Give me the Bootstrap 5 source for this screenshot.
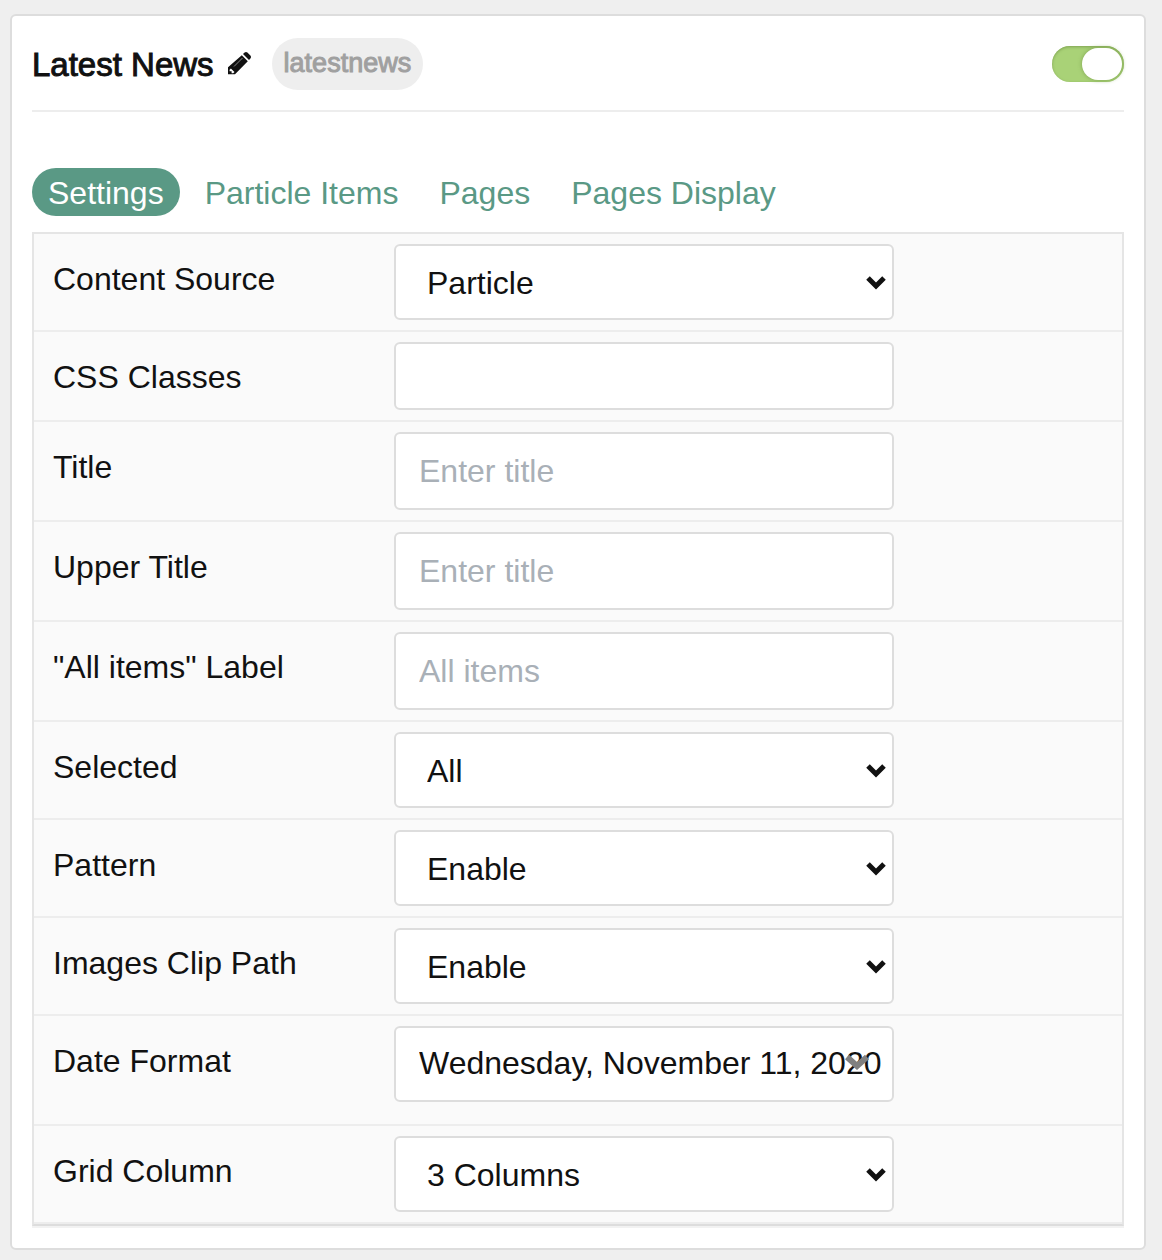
<!DOCTYPE html>
<html lang="en">
<head>
<meta charset="utf-8">
<meta name="viewport" content="width=device-width, initial-scale=1">
<title>Latest News</title>
<link href="https://cdn.jsdelivr.net/npm/bootstrap@5.3.0/dist/css/bootstrap.min.css" rel="stylesheet">
<style>
body{background:#efefef;color:#111;font-family:"Liberation Sans",Arial,sans-serif;font-size:32px;line-height:50px}
.page-wrap{padding:14px 16px 10px 10px}
.particle-card{border:2px solid #ddd;border-radius:6px;padding:22px 20px}
.particle-head{border-bottom:2px solid #ededed;padding-bottom:20px;margin-bottom:56px}
.particle-title{font-size:33px;line-height:50px;padding-top:2px;font-weight:400;-webkit-text-stroke:1px #111}
.edit-btn{color:#111;line-height:0;margin-left:13px}
.type-pill{background:#eee;color:#a0a0a0;font-size:27px;line-height:50px;height:52px;border-radius:26px;padding:0 12px;margin-left:21px;-webkit-text-stroke:1px #a0a0a0}
.toggle-switch.form-check-input{width:72px;height:36px;margin:0;border:0;border-radius:18px;background:#a9d277;box-shadow:inset 0 1px 3px #7fa352;appearance:none;position:relative}
.toggle-switch::after{content:"";position:absolute;top:2px;right:2px;width:40px;height:32px;border-radius:16px;background:#fff;box-shadow:0 0 4px #7fa352}
.tab-pills{gap:9px;margin-bottom:16px}
.tab-pills .nav-link{padding:0 16px;height:48px;line-height:50px;border-radius:24px;color:#5a9985}
.tab-pills .nav-link.active{background:#5a9985;color:#fff}
.settings-panel{background:#fafafa;border:2px solid #e5e5e5;border-bottom-color:#ddd;box-shadow:0 2px 0 #f2f2f2}
.setting-row{border-bottom:2px solid #ededed;padding:10px 20px 10px 19px}
.setting-row label{flex:0 0 341px;padding-top:10px}
.control-wrap{position:relative;flex:0 1 500px;min-width:0}
.setting-row.row-tall{padding-bottom:22px}
.control-wrap .form-control,.control-wrap .form-select{height:76px;border:2px solid #ddd;border-radius:6px;background-color:#fff;color:#111;font-size:32px;line-height:48px;padding:0 23px}
.control-wrap .form-control{height:78px}
.control-wrap .input-short{height:68px}
.control-wrap .form-control::placeholder{color:#a9b0b7}
.control-wrap .form-select{padding:2px 30px 0 31px;background-image:url("data:image/svg+xml,%3Csvg xmlns='http://www.w3.org/2000/svg' viewBox='0 0 20 14'%3E%3Cpath d='M2 2l8 8 8-8' fill='none' stroke='%23111' stroke-width='5'/%3E%3C/svg%3E");background-size:20px 14px;background-position:right 6px top 30px}
.control-wrap .date-select{padding:0 0 2px 23px;background-image:none}
.date-arrow{position:absolute;right:25px;top:28px;pointer-events:none}
</style>
<script src="https://cdn.jsdelivr.net/npm/bootstrap@5.3.0/dist/js/bootstrap.bundle.min.js"></script>
</head>
<body>
<main class="page-wrap">
<section class="particle-card bg-white">
  <header class="particle-head d-flex align-items-center">
    <h1 class="particle-title mb-0">Latest News</h1>
    <button type="button" class="edit-btn btn p-0 border-0" aria-label="Edit title">
      <svg width="24" height="24" viewBox="0 0 24 24"><path fill="currentColor" d="M14.800 3.200l6 6L8 22.200H1v-7zM16 2l1.600-1.400q1.400-1.200 2.800 0l3 3q1.200 1.400 0 2.800L22 8z"/><path fill="none" stroke="#888" stroke-width="1" d="M7 14.500L15.500 6"/><path fill="#fff" d="M2.600 17.800l1.300-1.300 3.600 3.600-1.300 1.200H4.600v-2h-2z"/></svg>
    </button>
    <span class="type-pill">latestnews</span>
    <input class="toggle-switch form-check-input ms-auto" type="checkbox" role="switch" aria-label="Enabled" checked>
  </header>
  <nav class="tab-pills nav nav-pills">
    <a class="nav-link active" aria-current="page" href="#settings">Settings</a>
    <a class="nav-link" href="#items">Particle Items</a>
    <a class="nav-link" href="#pages">Pages</a>
    <a class="nav-link" href="#display">Pages Display</a>
  </nav>
  <form class="settings-panel" id="settings">
    <div class="setting-row d-flex"><label for="source">Content Source</label><div class="control-wrap"><select class="form-select" id="source"><option>Particle</option></select></div></div>
    <div class="setting-row d-flex"><label for="css">CSS Classes</label><div class="control-wrap"><input class="form-control input-short" type="text" id="css"></div></div>
    <div class="setting-row d-flex"><label for="title">Title</label><div class="control-wrap"><input class="form-control" type="text" id="title" placeholder="Enter title"></div></div>
    <div class="setting-row d-flex"><label for="upper">Upper Title</label><div class="control-wrap"><input class="form-control" type="text" id="upper" placeholder="Enter title"></div></div>
    <div class="setting-row d-flex"><label for="all">"All items" Label</label><div class="control-wrap"><input class="form-control" type="text" id="all" placeholder="All items"></div></div>
    <div class="setting-row d-flex"><label for="selected">Selected</label><div class="control-wrap"><select class="form-select" id="selected"><option>All</option></select></div></div>
    <div class="setting-row d-flex"><label for="pattern">Pattern</label><div class="control-wrap"><select class="form-select" id="pattern"><option>Enable</option></select></div></div>
    <div class="setting-row d-flex"><label for="clip">Images Clip Path</label><div class="control-wrap"><select class="form-select" id="clip"><option>Enable</option></select></div></div>
    <div class="setting-row row-tall d-flex"><label for="date">Date Format</label><div class="control-wrap"><select class="form-select date-select" id="date"><option>Wednesday, November 11, 2020</option></select><svg class="date-arrow" width="24" height="16" viewBox="0 0 24 16" aria-hidden="true"><path d="M2 3l10 9 10-9" fill="none" stroke="#808080" stroke-width="6"/></svg></div></div>
    <div class="setting-row d-flex"><label for="grid">Grid Column</label><div class="control-wrap"><select class="form-select" id="grid"><option>3 Columns</option></select></div></div>
  </form>
</section>
</main>
</body>
</html>
